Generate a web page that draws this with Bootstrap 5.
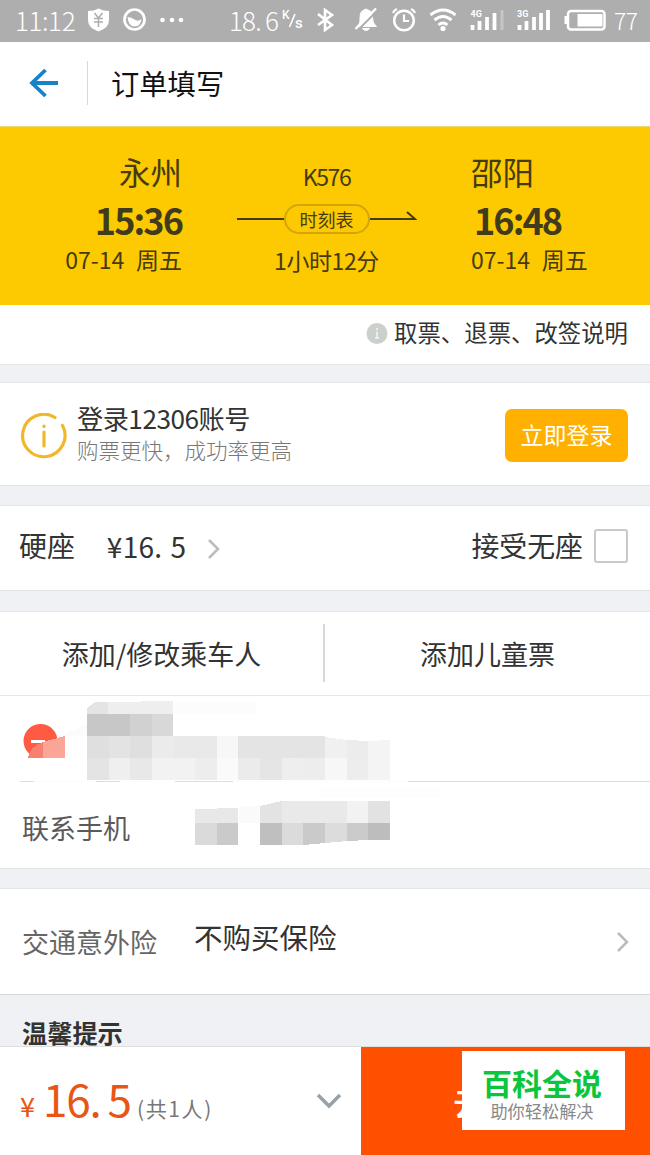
<!DOCTYPE html>
<html lang="zh-CN">
<head>
<meta charset="utf-8">
<meta name="viewport" content="width=device-width, initial-scale=1">
<title>订单填写</title>
<link href="https://cdn.jsdelivr.net/npm/bootstrap@5.3.0/dist/css/bootstrap.min.css" rel="stylesheet">
<style>
  body { font-family: "Noto Sans CJK SC", sans-serif; font-weight: 400; background: #eff1f4; color: #333; width: 650px; height: 1155px; overflow: hidden; line-height: 1; }
  svg { display: block; flex: none; }
  .statusbar { height: 42px; background: #aeaeae; color: #fff; padding-left: 15px; padding-bottom: 2px; font-weight: 300; }
  .clock { font-size: 26px; letter-spacing: -.4px; width: 72px; }
  .speed { font-size: 26px; letter-spacing: -.8px; width: 53px; margin-left: 42px; }
  .dot { margin-right: .16em; }
  .pct { font-size: 23px; letter-spacing: -.5px; margin-left: -2px; }
  .titlebar { height: 84px; padding: 0 0 2px 28px; }
  .rule { width: 1px; background: #d8d8d8; }
  .page-title { font-size: 28.3px; color: #111; margin-left: 23px; }
  .trip { height: 179px; background: #fdc900; color: #453b12; display: grid; grid-template-columns: 182px 289px 179px; border-top: 1px solid #ecd572; }
  .city { font-size: 31.500px; line-height: 36px; margin-top: 26px; }
  .hour { font-size: 36px; font-weight: 700; line-height: 44px; margin-top: 8px; letter-spacing: -1.9px; color: #3f3b1c; }
  .day { font-size: 23px; line-height: 28px; margin-top: 4px; letter-spacing: -.4px; white-space: pre; }
  .wide { letter-spacing: 0; word-spacing: 6.500px; }
  .train { font-size: 23px; line-height: 26px; margin-top: 36px; letter-spacing: -1.4px; }
  .pill { width: 86px; height: 30px; border: 2px solid #d2a60a; font-size: 18px; padding-bottom: 1px; }
  .notes { height: 60px; font-size: 23.4px; padding: 0 22px 4px 0; border-bottom: 1px solid #e3e5e7; }
  .sheet { background: #fff; border-top: 1px solid #e3e6e8; border-bottom: 1px solid #e0e2e4; }
  .login { margin-top: 17px; height: 104px; padding: 0 22px 0 21px; }
  .login-title { font-size: 26.2px; letter-spacing: -.5px; line-height: 34px; }
  .login-sub { font-size: 21.5px; line-height: 30px; color: #777; font-weight: 300; }
  .btn-login { width: 123px; height: 53px; background: #ffb000; color: #fff; font-size: 23px; border-radius: 7px; padding: 0 0 1px; border: 0; font-weight: 400; margin-top: 2px; }
  .seat { margin-top: 19px; height: 86px; padding: 0 22px 4px 19px; font-size: 27.9px; }
  .price { margin-left: 32px; letter-spacing: .3px; font-size: 28px; width: 99px; }
  .price .dot { margin-right: 8px; }
  .tickbox.tickbox { width: 34px; height: 34px; border: 2px solid #c9c9c9; border-radius: 3px; margin: 0 0 0 11px; }
  .people { margin-top: 20px; height: 258px; }
  .adders { height: 84px; font-size: 27px; border-bottom: 1px solid #e5e8e8; padding-bottom: 1px; }
  .passenger { height: 86px; }
  .phone { height: 86px; font-size: 27px; padding: 0 0 0 22px; color: #5a5a5a; }
  .insure { margin-top: 19px; height: 107px; padding: 0 20px 0 22px; font-size: 27px; border-bottom-color: #d6d9da; }
  .insure-value { font-size: 28.5px; margin: -9px 0 0 37px; }
  .tips { height: 51px; padding: 24px 0 0 22px; font-size: 25.2px; font-weight: 700; line-height: 27px; }
  .paybar { height: 109px; border-top: 1px solid #dedede; }
  .total { width: 361px; padding-left: 20px; color: #e95514; }
  .sum { padding-bottom: 7px; }
  .yen { font-size: 27px; }
  .amount { font-size: 44px; letter-spacing: -1.2px; margin-left: 8px; width: 90px; }
  .amount .dot { margin-right: 7px; }
  .count { font-size: 21px; letter-spacing: 1.6px; color: #777; margin-left: 4px; }
  .btn-pay { width: 289px; background: #ff5000; color: #fff; font-size: 35px; font-weight: 500; border: 0; border-radius: 0; text-align: left; padding: 0 0 0 92px; }
  .stamp { position: absolute; left: 462px; top: 1051px; width: 163px; height: 79px; padding-right: 3px; }
  .stamp-name { font-size: 30px; font-weight: 700; color: #0ac63c; line-height: 36px; margin-top: 13px; }
  .stamp-sub { font-size: 17.2px; font-weight: 400; color: #888; line-height: 20px; margin-top: 1px; }
</style>
</head>
<body>
<div class="statusbar d-flex align-items-center">
  <span class="clock">11:12</span>
  <svg width="100" height="26" viewBox="87 7 100 26" fill="#fff"><path d="M88 11q6 0 10.500-2.500Q103 11 109 11v9q0 8-10.500 11.500Q88 28 88 20z"/><path d="M94.500 13l4 5 4-5M94 18.500h9M94 22h9M98.500 18v9" fill="none" stroke="#aeaeae" stroke-width="1.600"/><circle cx="134.500" cy="19.500" r="10" fill="none" stroke="#fff" stroke-width="2.700"/><path d="M127.500 17q4 0 7 2.500t7-.500q-1 7.500-7 7.500t-7-9.500z"/><circle cx="162.500" cy="20" r="2.300"/><circle cx="172" cy="20" r="2.300"/><circle cx="181" cy="20" r="2.300"/></svg>
  <span class="speed text-nowrap">18<span class="dot">.</span>6</span>
  <svg width="334" height="30" viewBox="282 5 334 30" fill="none" stroke="#fff" stroke-width="2.500"><g fill="#fff" stroke="none" font-family="Roboto, sans-serif"><text x="282" y="19" font-size="12" font-weight="500">K</text><text x="295" y="28" font-size="15" font-weight="500">s</text><text x="470.500" y="17" font-size="9" font-weight="700">4G</text><text x="517" y="17" font-size="9" font-weight="700">3G</text></g><path d="M289.500 27l5.500-13" stroke-width="1.600"/><path d="M318 14l14 11-7 5V10l7 5-14 10" stroke-width="2.600"/><path d="M357 26.500c3-3 3-4 3-8.500q0-7 4-8 2-2 4 0 4.500 1 4.500 8 0 5.500 4 8.500z" fill="#fff" stroke-width="1"/><path d="M362.500 28.500q3.500 4 7 0z" fill="#fff" stroke-width="1"/><path d="M378.500 9.500L358 30" stroke="#aeaeae" stroke-width="2"/><path d="M376 8.500L355.500 29" stroke-width="2.400"/><circle cx="404" cy="20.500" r="9.800"/><path d="M404 14.500v6.500h5M393 13q1-3 4-4M411 9q3 1 4 4" stroke-width="2.200"/><path d="M430.500 15q12.500-10 25 0M434.500 20q8.500-7 17 0M438.500 25q4.500-4 9 0" stroke-width="3"/><circle cx="443" cy="28.500" r="2.600" fill="#fff" stroke="none"/><path d="M472.500 30v-5M479.500 30v-9M487 30V17M494.500 30V13M519.500 30v-5M526.500 30v-9M534 30V17M541 30V13M548 30V10" stroke-width="3.800"/><path d="M502 30V10" stroke="#c6c6c6" stroke-width="3"/><rect x="568" y="11" width="36.500" height="18.500" rx="3"/><path d="M566 16v8" stroke-width="3"/><path d="M577.500 14h25v12.500h-25z" fill="#fff" stroke="none"/></svg>
  <span class="pct">77</span>
</div>
<header class="titlebar bg-white d-flex align-items-center">
  <svg width="32" height="32" viewBox="28 67 32 32" fill="none" stroke="#1683c8" stroke-width="3.800"><path d="M58 83H32M45.500 70L32 83l13.500 13"/></svg>
  <div class="rule" style="height:44px;margin-left:27px"></div>
  <div class="page-title">订单填写</div>
</header>
<section class="trip">
  <div class="text-end"><div class="city">永州</div><div class="hour">15:36</div><div class="day wide">07-14 周五</div></div>
  <div class="d-flex flex-column align-items-center">
    <div class="train">K576</div>
    <div class="d-flex align-items-center" style="margin-top:15px">
      <svg width="47" height="30" viewBox="0 0 47 30"><path d="M0 15h47" stroke="#453b12" stroke-width="2"/></svg>
      <div class="pill rounded-pill d-flex align-items-center justify-content-center">时刻表</div>
      <svg width="47" height="30" viewBox="0 0 47 30" fill="none" stroke="#453b12" stroke-width="2"><path d="M0 15h45L37 8"/></svg>
    </div>
    <div class="day" style="margin-top:12px">1小时12分</div>
  </div>
  <div><div class="city">邵阳</div><div class="hour" style="padding-left:3px">16:48</div><div class="day wide">07-14 周五</div></div>
</section>
<div class="notes bg-white d-flex align-items-center justify-content-end">
  <svg width="22" height="22" viewBox="0 0 22 22" style="margin-right:6px"><circle cx="11" cy="11.500" r="10.500" fill="#ccd0cc"/><path d="M11 6v2M11 9.500v6M9 16h4" stroke="#f4f4f4" stroke-width="1.500"/></svg>
  取票、退票、改签说明
</div>
<section class="sheet login d-flex align-items-center">
  <svg width="46" height="46" viewBox="0 0 46 46" fill="none" stroke="#f0b72a" stroke-width="3.200" stroke-linecap="round" style="margin-top:3px"><path d="M34 4.500A21.200 21.200 0 1 0 41.500 12.500M23 19v14M23 13v.500"/></svg>
  <div style="margin:-2px 0 0 10px"><div class="login-title">登录12306账号</div><div class="login-sub">购票更快，成功率更高</div></div>
  <button class="btn btn-login ms-auto">立即登录</button>
</section>
<section class="sheet seat d-flex align-items-center">
  <span>硬座</span><span class="price">¥16<span class="dot">.</span>5</span>
  <svg width="14" height="22" viewBox="0 0 14 22" fill="none" stroke="#bbb" stroke-width="2.500" style="margin:6px 0 0 1px"><path d="M2 2l9 9-9 9"/></svg>
  <label class="ms-auto" for="standing">接受无座</label><input class="form-check-input tickbox" type="checkbox" id="standing">
</section>
<section class="sheet people">
  <div class="adders d-flex align-items-center">
    <div class="text-center" style="width:323px">添加/修改乘车人</div>
    <div class="rule" style="height:58px;width:2px"></div>
    <div class="text-center flex-fill">添加儿童票</div>
  </div>
  <div class="passenger">
    <svg width="650" height="86" viewBox="0 696 650 86" shape-rendering="crispEdges">
      <path d="M20 781.500h630" stroke="#dedede"/><path d="M34 781.500h62M120 781.500h55M233 781.500h175" stroke="#fbfbfb" stroke-width="2"/>
      <path d="M174 702h82v12h-82z" fill="#fcfcfc"/><path d="M60 736l27-12v12z" fill="#fbfbfb"/>
      <circle cx="40.500" cy="741" r="17" fill="#ff5a42" shape-rendering="auto"/><path d="M23 758h42v8H23zM23 745l5 13h-5z" fill="#fff"/><path d="M31 741.500h14" stroke="#fff" stroke-width="3"/>
      <path d="M28 758q2-12 15-16v16z" fill="#f8806f"/><path d="M43 742l22-6v22H43z" fill="#fba596"/>
      <path d="M87 714v-5q7-9 16-7h5v12z" fill="#e4e4e4"/><path d="M108 702l65-1v13h-65z" fill="#eee"/>
      <path d="M87 714h43v22H87z" fill="#c7c7c7"/><path d="M130 714h22v22h-22z" fill="#d1d1d1"/><path d="M152 714h21v22h-21z" fill="#d8d8d8"/>
      <path d="M87 736h22v22H87zM130 736h22v22h-22z" fill="#dfdfdf"/><path d="M109 736h21v22h-21z" fill="#e3e3e3"/><path d="M152 736h22v22h-22z" fill="#ebebeb"/><path d="M174 736h43v22h-43z" fill="#e9e9e9"/><path d="M217 736h21v22h-21z" fill="#f7f7f7"/><path d="M238 736h87v22h-87z" fill="#e4e4e4"/><path d="M325 737l22 3v18h-22z" fill="#f0f0f0"/><path d="M347 740l21 1v17h-21z" fill="#ececec"/><path d="M368 741l22-1v18h-22z" fill="#f4f4f4"/>
      <path d="M87 758h22v22H87z" fill="#e4e4e4"/><path d="M109 758h21v22h-21z" fill="#efefef"/><path d="M130 758h22v22h-22z" fill="#e8e8e8"/><path d="M152 758h43v22h-43z" fill="#f2f2f2"/><path d="M195 758h22v22h-22z" fill="#ededed"/><path d="M217 758h21v22h-21z" fill="#fafafa"/><path d="M238 758h22v22h-22z" fill="#ebebeb"/><path d="M260 758h22v22h-22z" fill="#e5e5e5"/><path d="M282 758h21v22h-21z" fill="#eee"/><path d="M303 758h22v22h-22z" fill="#ededed"/><path d="M325 758h22v22h-22z" fill="#f7f7f7"/><path d="M347 758h21v22h-21z" fill="#ededed"/><path d="M368 758h22v22h-22z" fill="#f4f4f4"/>
    </svg>
  </div>
  <div class="phone d-flex align-items-center">
    <span style="width:173px;margin-top:4px">联系手机</span>
    <svg width="245" height="86" viewBox="195 782 245 86" shape-rendering="crispEdges">
      <path d="M320 788h120v10H320z" fill="#fdfdfd"/><path d="M239 807l21-2v18h-21z" fill="#fafafa"/>
      <path d="M195 809l43-1v15h-43z" fill="#e8e8e8"/><path d="M260 806l22-5v22h-22z" fill="#e3e3e3"/><path d="M282 801h65v22h-65z" fill="#e9e9e9"/><path d="M347 801h21v22h-21z" fill="#f2f2f2"/><path d="M368 801h22v22h-22z" fill="#e2e2e2"/>
      <path d="M195 823h22v22h-22z" fill="#dadada"/><path d="M217 823h21v22h-21z" fill="#cacaca"/><path d="M260 823h22v22h-22z" fill="#bfbfbf"/><path d="M282 823h21v22h-21z" fill="#dbdbdb"/><path d="M303 823h22v20l-22 2z" fill="#cacaca"/><path d="M325 823h22v18l-22 2z" fill="#dcdcdc"/><path d="M347 823h21v17l-21 1z" fill="#cbcbcb"/><path d="M368 823h22v17h-22z" fill="#bdbdbd"/>
    </svg>
  </div>
</section>
<section class="sheet insure d-flex align-items-center">
  <span style="color:#666">交通意外险</span><span class="insure-value">不购买保险</span>
  <svg class="ms-auto" width="14" height="22" viewBox="0 0 14 22" fill="none" stroke="#bbb" stroke-width="2.500"><path d="M2 2l9 9-9 9"/></svg>
</section>
<div class="tips">温馨提示</div>
<footer class="paybar bg-white d-flex">
  <div class="total d-flex align-items-center">
    <div class="sum d-flex align-items-baseline"><span class="yen">¥</span><span class="amount">16<span class="dot">.</span>5</span><span class="count">(共1人)</span></div>
    <svg class="ms-auto" width="26" height="16" viewBox="0 0 26 16" fill="none" stroke="#95a3a8" stroke-width="3.500" style="margin-right:19px"><path d="M2 2l11 11L24 2"/></svg>
  </div>
  <button class="btn btn-pay">去</button>
</footer>
<div class="stamp bg-white text-center"><div class="stamp-name">百科全说</div><div class="stamp-sub">助你轻松解决</div></div>
<script src="https://cdn.jsdelivr.net/npm/bootstrap@5.3.0/dist/js/bootstrap.bundle.min.js"></script>
</body>
</html>
